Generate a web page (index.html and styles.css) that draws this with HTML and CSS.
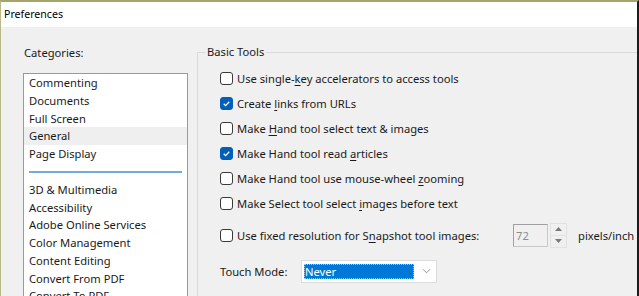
FILE: index.html
```html
<!DOCTYPE html>
<html lang="en">
<head>
  <meta charset="UTF-8">
  <title>Preferences</title>
  <link rel="stylesheet" href="styles.css">
</head>
<body>
  <div class="window">
    <div class="titlebar">Preferences</div>

    <div class="main">
      <div class="categories">
        <div class="cat-label">Categories:</div>
        <div class="listbox">
          <div class="item">Commenting</div>
          <div class="item">Documents</div>
          <div class="item">Full Screen</div>
          <div class="item selected">General</div>
          <div class="item">Page Display</div>
          <div class="sep"></div>
          <div class="item">3D &amp; Multimedia</div>
          <div class="item">Accessibility</div>
          <div class="item">Adobe Online Services</div>
          <div class="item">Color Management</div>
          <div class="item">Content Editing</div>
          <div class="item">Convert From PDF</div>
          <div class="item">Convert To PDF</div>
        </div>
      </div>

      <fieldset class="group">
        <legend>Basic Tools</legend>

        <label class="opt"><span class="box"></span><span>Use single-<u>k</u>ey accelerators to access tools</span></label>
        <label class="opt"><span class="box checked"><svg viewBox="0 0 13 13"><path d="M3.2 6.8 L5.4 9 L9.8 4.4" fill="none" stroke="#fff" stroke-width="1.4"/></svg></span><span>Create <u>l</u>inks from URLs</span></label>
        <label class="opt"><span class="box"></span><span>Make <u>H</u>and tool select text &amp; images</span></label>
        <label class="opt"><span class="box checked"><svg viewBox="0 0 13 13"><path d="M3.2 6.8 L5.4 9 L9.8 4.4" fill="none" stroke="#fff" stroke-width="1.4"/></svg></span><span>Make Hand tool read <u>a</u>rticles</span></label>
        <label class="opt"><span class="box"></span><span>Make Hand tool use mouse-wheel <u>z</u>ooming</span></label>
        <label class="opt"><span class="box"></span><span>Make Select tool select <u>i</u>mages before text</span></label>

        <div class="opt snap">
          <span class="box"></span>
          <span class="snap-label">Use fixed resolution for S<u>n</u>apshot tool images:</span>
          <span class="num">72</span>
          <span class="spin">
            <span class="spin-btn"><svg viewBox="0 0 7 4"><path d="M0 4 L3.5 0 L7 4Z" fill="#7a7a7a"/></svg></span>
            <span class="spin-btn"><svg viewBox="0 0 7 4"><path d="M0 0 L3.5 4 L7 0Z" fill="#7a7a7a"/></svg></span>
          </span>
          <span class="unit">pixels/inch</span>
        </div>

        <div class="touch">
          <span class="touch-label">Touch Mode:</span>
          <div class="select">
            <span class="select-value">Never</span>
            <svg class="chev" viewBox="0 0 10 6"><path d="M1 1 L5 5 L9 1" fill="none" stroke="#8a8a8a" stroke-width="1"/></svg>
          </div>
        </div>
      </fieldset>
    </div>
  </div>
</body>
</html>
```

FILE: styles.css
```css
body { margin: 0; background: #f0f0f0; font-family: "Noto Sans", "Open Sans", sans-serif; font-size: 11.2px; color: #1a1a1a; }
.window { height: 294px; overflow: hidden; border-top: 2px solid #a4a56c; border-left: 1px solid #b8b98a; border-right: 2px solid #1c1c1c; width: 636px; }
.titlebar { height: 25px; line-height: 24px; background: #fff; padding-left: 3px; font-size: 10.6px; color: #000; }
.main { display: flex; }

.categories { width: 174px; padding-left: 22px; flex: none; }
.cat-label { height: 20px; line-height: 20px; margin-top: 16px; padding-left: 1px; }
.listbox { margin-top: 10px; width: 163px; height: 260px; background: #fff; border: 1px solid #9a9a9a; }
.item { height: 17.75px; line-height: 17.75px; padding-left: 5px; }
.item.selected { background: #efefef; }
.sep { height: 2px; background: #72acd6; margin: 8px 5px 8px 5px; }

.group { flex: 1; margin: 17px 0 0 0; padding: 6px 0 0 22px; border: 1px solid #dadada; border-right: none; border-bottom: none; }
.group legend { margin-left: -15px; padding: 0 2px; line-height: 16px; }
.opt { display: flex; align-items: center; height: 25px; white-space: nowrap; }
.box { width: 11px; height: 11px; border: 1px solid #3a3a3a; border-radius: 3px; background: #fff; margin-right: 4px; flex: none; display: flex; }
.box.checked { background: #005fb8; border-color: #005fb8; }
.box svg { width: 11px; height: 11px; }
u { text-decoration-thickness: 1px; text-underline-offset: 2px; }

.snap { margin-top: 6px; height: 26px; }
.snap-label { width: 276px; }
.num { width: 31px; height: 21px; line-height: 21px; padding-left: 2px; border: 1px solid #c8c8c8; border-top-color: #a0a0a0; border-left-color: #a0a0a0; color: #8c8c8c; background: #f0f0f0; }
.spin { display: flex; flex-direction: column; margin-left: 2px; width: 15px; height: 23px; border: 1px solid #e2e2e2; }
.spin-btn { flex: 1; display: flex; align-items: center; justify-content: center; }
.spin-btn + .spin-btn { border-top: 1px solid #e2e2e2; }
.spin-btn svg { width: 7px; height: 4px; }
.unit { margin-left: 11px; }

.touch { display: flex; align-items: center; margin-top: 10px; height: 26px; }
.touch-label { width: 81px; }
.select { display: flex; align-items: center; width: 132px; height: 21px; border: 1px solid #dcdcdc; background: #fff; padding-left: 2px; }
.select-value { width: 109px; height: 15px; line-height: 15px; background: #0078d7; color: #fff; padding-left: 1px; outline: 1px dotted #9ec9f0; outline-offset: -1px; }
.chev { width: 9px; height: 6px; margin-left: 8px; }
```
